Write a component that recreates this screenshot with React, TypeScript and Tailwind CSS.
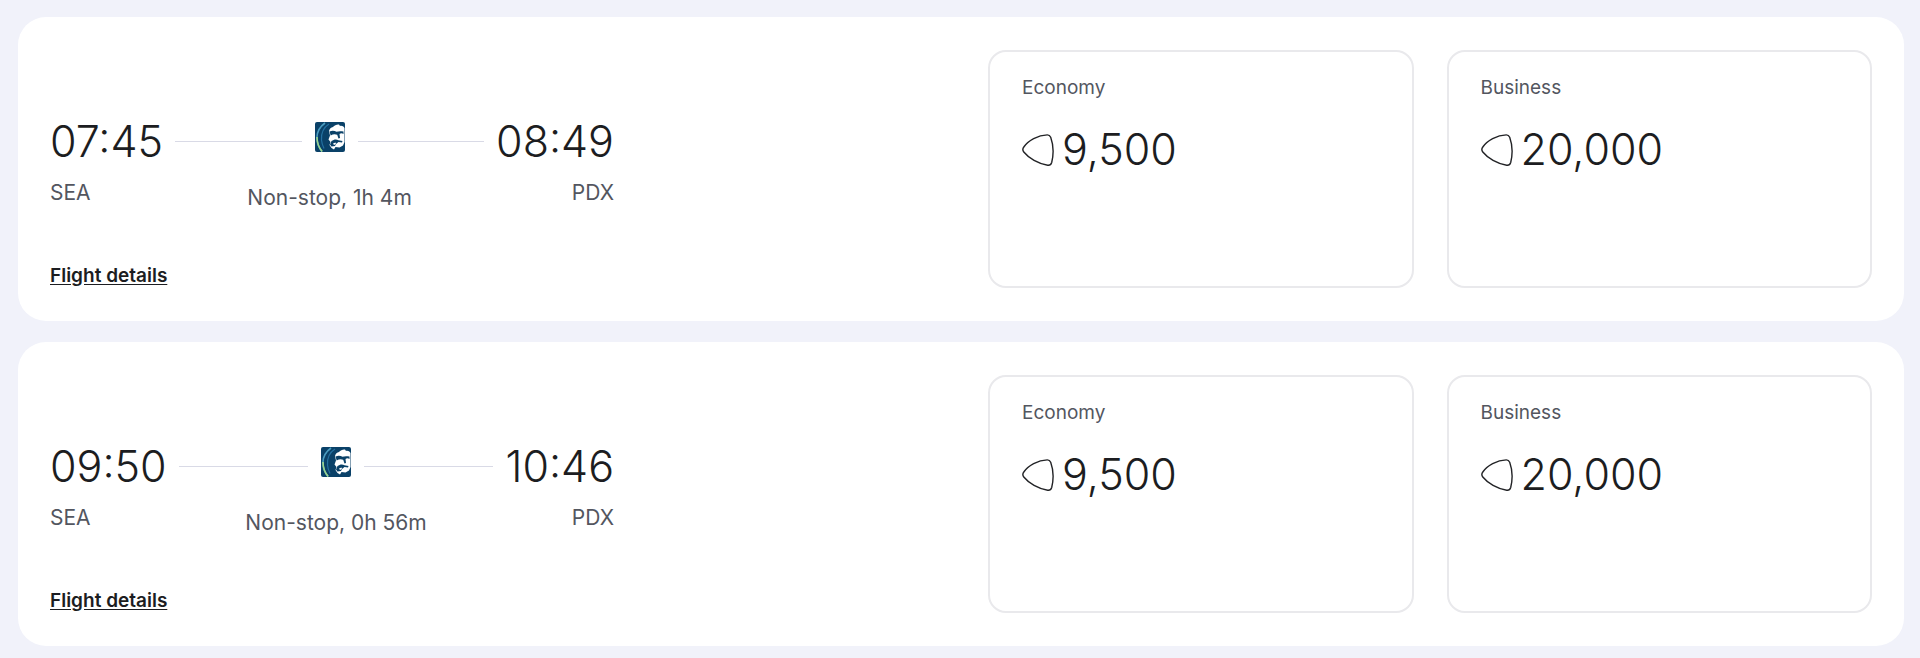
import React from 'react';

type Fare = { cabin: string; points: string };

type Flight = {
  departs: string;
  arrives: string;
  from: string;
  to: string;
  duration: string;
  fares: Fare[];
};

const fares: Fare[] = [
  { cabin: 'Economy', points: '9,500' },
  { cabin: 'Business', points: '20,000' }
];

const flights: Flight[] = [
  { departs: '07:45', arrives: '08:49', from: 'SEA', to: 'PDX', duration: 'Non-stop, 1h 4m', fares },
  { departs: '09:50', arrives: '10:46', from: 'SEA', to: 'PDX', duration: 'Non-stop, 0h 56m', fares }
];

const AirlineLogo: React.FC = () => (
  <svg className="w-[30px] h-[30px] shrink-0" viewBox="0 0 30 30" role="img" aria-label="Alaska Airlines">
    <rect width="30" height="30" rx="2" fill="#0a4168" />
    <path d="M10 1C4.500 5 1.500 10 2 17c0.300 5 2 9 5 12.500" fill="none" stroke="#4a9cc0" strokeWidth="1.6" />
    <path d="M2 15c0 6 1.700 10.500 5.200 14.500" fill="none" stroke="#9bd58c" strokeWidth="1.6" />
    <path d="M14 2C8.500 5.500 6 11 6.500 18c0.300 3.500 1.200 6 2.500 8.500" fill="none" stroke="#2470a0" strokeWidth="1.2" />
    <path d="M14 9c0.500-2.500 2-3.500 4-4 1.500-2 4-2.800 6-2.500l1 1.500c2-0.500 3.500 0.500 4.500 2v14l-1.500 3.500-3.500 2-4-0.500-1.500 2.500-2.500-1.500-2-3 1-3-2-2.500 1.500-4z" fill="#fff" />
    <path d="M14.500 9.500c2.500-1.200 5-1 7 0.300 1.500-0.700 4-0.900 7-0.300v2.500c-1.500-0.900-2.800-0.800-4 0l0.500 4-1.500 0.500-1.300-3.800c-2-0.900-4.500-0.700-6.500 0.800z" fill="#0a4168" />
    <path d="M16.500 19c2.500-2 5-2 7-0.800l4 0.800-0.500 1.500-3.500-0.500-2.500 2-1 2-3.500 0.500-1.500-2z" fill="#0a4168" />
    <path d="M18 21.500l2.500-1 0.500 1.500-2 1z" fill="#fff" />
  </svg>
);

const PointsIcon: React.FC = () => (
  <svg className="w-8 h-[34px] shrink-0" viewBox="0 -2 32 34" fill="none" stroke="#222326" strokeWidth="1.4" aria-hidden="true">
    <path d="M1.800 13C6 6.500 16 1 25.300 0.900c1.700 0 2.700 0.700 3.400 2.400 2.800 7.800 2.900 17.500 1 25.200-0.600 2-1.900 3-4 2.700C16.500 29.800 6.500 24 1.800 18c-1.400-1.800-1.300-3.300 0-5z" />
  </svg>
);

const FareCard: React.FC<Fare> = ({ cabin, points }) => (
  <div className="flex-1 min-h-[238px] rounded-[18px] border-2 border-[#e9e9ec] px-8 py-6">
    <p className="text-[19px] leading-6 text-[#53565f]">{cabin}</p>
    <p className="mt-6 flex items-center gap-2 text-[43px] leading-[50px] font-light text-[#1c1d21]">
      <PointsIcon />
      {points}
    </p>
  </div>
);

const FlightCard: React.FC<{ flight: Flight }> = ({ flight }) => (
  <article className="flex justify-between rounded-[28px] bg-white px-8 py-[33px]">
    <div className="flex w-[564px] flex-col justify-end">
      <div className="flex gap-3">
        <div>
          <p className="text-[43px] leading-[50px] font-light text-[#1c1d21]">{flight.departs}</p>
          <p className="mt-[13px] text-[21px] leading-7 text-[#53565f]">{flight.from}</p>
        </div>
        <div className="flex flex-1 flex-col items-center">
          <div className="flex h-[50px] w-full items-center gap-[13px]">
            <span className="h-px flex-1 bg-[#d9dae6]" />
            <div className="pb-2">
              <AirlineLogo />
            </div>
            <span className="h-px flex-1 bg-[#d9dae6]" />
          </div>
          <p className="mt-[18px] text-[21px] leading-7 text-[#53565f]">{flight.duration}</p>
        </div>
        <div className="text-right">
          <p className="text-[43px] leading-[50px] font-light text-[#1c1d21]">{flight.arrives}</p>
          <p className="mt-[13px] text-[21px] leading-7 text-[#53565f]">{flight.to}</p>
        </div>
      </div>
      <a href="#details" className="mt-[52px] self-start text-[19px] leading-6 font-semibold text-[#1c1d21] underline underline-offset-2">
        Flight details
      </a>
    </div>
    <div className="flex w-[884px] gap-[33px]">
      {flight.fares.map((fare) => (
        <FareCard key={fare.cabin} {...fare} />
      ))}
    </div>
  </article>
);

const App: React.FC = () => {
  return (
    <main className="min-h-screen space-y-[21px] bg-[#f1f2fa] py-[17px] pr-4 pl-[18px] font-['Inter','Liberation_Sans',sans-serif]">
      {flights.map((flight) => (
        <FlightCard key={flight.departs} flight={flight} />
      ))}
    </main>
  );
};

export default App;
